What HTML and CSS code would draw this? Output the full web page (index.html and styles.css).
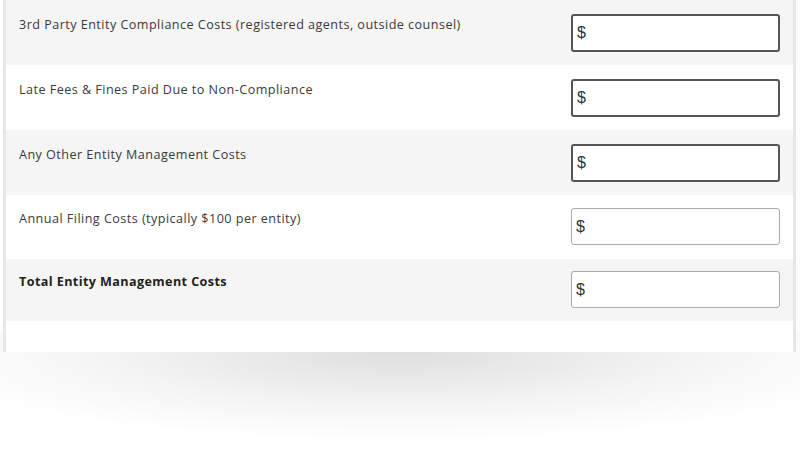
FILE: index.html
```html
<!DOCTYPE html>
<html>
<head>
<meta charset="utf-8">
<link rel="stylesheet" href="styles.css">
</head>
<body>
<div class="stage">
  <div class="card">
    <div class="row alt">
      <div class="label">3rd Party Entity Compliance Costs (registered agents, outside counsel)</div>
      <div class="field strong"><span>$</span></div>
    </div>
    <div class="row">
      <div class="label">Late Fees &amp; Fines Paid Due to Non-Compliance</div>
      <div class="field strong"><span>$</span></div>
    </div>
    <div class="row alt">
      <div class="label">Any Other Entity Management Costs</div>
      <div class="field strong"><span>$</span></div>
    </div>
    <div class="row short">
      <div class="label">Annual Filing Costs (typically $100 per entity)</div>
      <div class="field"><span>$</span></div>
    </div>
    <div class="row alt short last">
      <div class="label bold">Total Entity Management Costs</div>
      <div class="field"><span>$</span></div>
    </div>
    <div class="foot"></div>
  </div>
</div>
</body>
</html>
```
FILE: styles.css
```css
html, body {
  margin: 0;
  padding: 0;
  background: #ffffff;
}
body {
  width: 800px;
  height: 450px;
  overflow: hidden;
  font-family: "Open Sans", "Liberation Sans", sans-serif;
}
.stage {
  position: relative;
  padding-left: 3px;
  width: 793px;
}
.stage::before {
  content: "";
  position: absolute;
  left: 0;
  right: -4px;
  top: 330px;
  height: 120px;
  background: radial-gradient(ellipse 62% 75% at 50% 18%, rgba(0,0,0,0.13), rgba(0,0,0,0.045) 60%, rgba(0,0,0,0) 100%);
  z-index: 0;
}
.card {
  position: relative;
  z-index: 1;
  width: 787px;
  height: 352px;
  background: #ffffff;
  border-left: 3px solid #e7e7e7;
  border-right: 3px solid #e7e7e7;
  display: flex;
  flex-direction: column;
}
.row {
  display: flex;
  align-items: flex-start;
  justify-content: space-between;
  padding: 14px 13px 13px 13px;
  background: #ffffff;
}
.row.alt {
  background: #f5f5f5;
}
.row.short {
  padding-top: 13px;
  padding-bottom: 14px;
}
.row.last {
  padding-top: 12px;
  padding-bottom: 13px;
}
.label {
  font-size: 12.6px;
  line-height: 16px;
  color: #3a3a3a;
  padding-top: 3px;
  letter-spacing: 0.46px;
}
.label.bold {
  font-weight: 700;
  color: #222;
  letter-spacing: 0.4px;
}
.field {
  box-sizing: border-box;
  width: 209px;
  height: 37px;
  border: 1px solid #a9a9a9;
  border-radius: 3px;
  background: #fff;
  display: flex;
  align-items: center;
  padding-left: 4px;
}
.field.strong {
  height: 38px;
  border: 2px solid #555555;
}
.field span {
  font-family: "Liberation Sans", sans-serif;
  font-size: 16px;
  color: #333;
}
.foot {
  flex: 1;
}
```
